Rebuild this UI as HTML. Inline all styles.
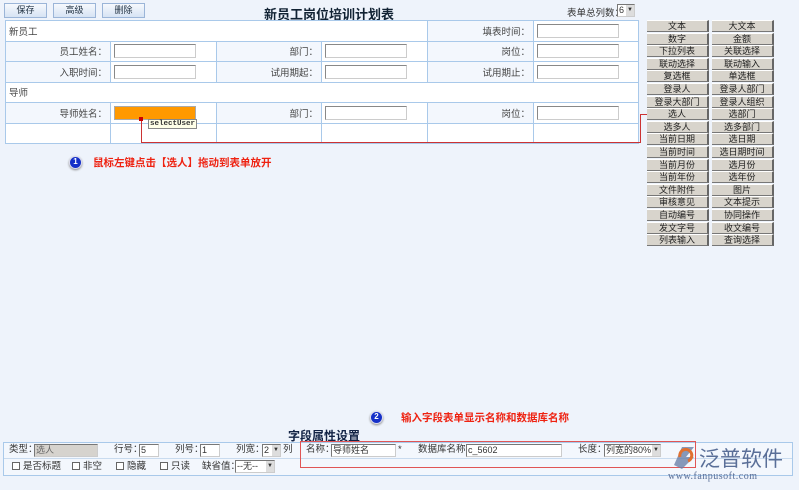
<!DOCTYPE html><html><head><meta charset="utf-8"><style>
*{box-sizing:border-box;margin:0;padding:0}
body{width:799px;height:490px;background:#eef3fb;position:relative;overflow:hidden;font-family:"Liberation Sans","Noto Sans CJK SC",sans-serif;font-size:10px;color:#333}
.a{position:absolute}
.btn{position:absolute;top:3px;height:15px;width:43px;border:1px solid #9bb5d8;background:linear-gradient(#f6f9fd,#d6e3f4);font-size:9px;text-align:center;line-height:13px;color:#234}
table{position:absolute;left:5px;top:20px;border-collapse:collapse;background:#fff}
td{border:1px solid #a9c9ea;height:20.5px;font-size:9.5px;padding:0 3px;color:#444}
td.l{text-align:right;background:#f3f7fd}
.in{display:inline-block;width:82px;height:14px;border:1px solid #888;border-right-color:#ccc;border-bottom-color:#ccc;background:#fff;vertical-align:middle}
.pb{position:absolute;width:62px;height:12px;background:#d8d4cc;border-right:2px solid #666;border-bottom:1px solid #777;border-top:1px solid #fff;font-size:9px;line-height:11px;text-align:center;color:#222}
.red{color:#e21;font-weight:bold;font-size:10.5px}
.num{position:absolute;width:13px;height:13px;border-radius:50%;background:#1530c8;border:1.5px solid #dde;color:#fff;font-size:8px;font-weight:bold;text-align:center;line-height:10px;box-shadow:0 1px 2px #888}
.sm{position:absolute;font-size:9.5px;color:#333;line-height:12px}
.box{position:absolute;height:12px;border:1px solid #777;border-right-color:#ccc;border-bottom-color:#ccc;background:#fff;font-size:9px;line-height:11px;padding-left:1px}
.cb{display:inline-block;width:8px;height:8px;border:1px solid #666;background:#fff;margin-right:3px;vertical-align:-1px}
</style></head><body>
<div class="btn" style="left:4px">保存</div>
<div class="btn" style="left:53px">高级</div>
<div class="btn" style="left:102px">删除</div>
<div class="a" style="left:264px;top:4px;font-size:13px;font-weight:bold;color:#123">新员工岗位培训计划表</div>
<div class="a" style="left:567px;top:5px;font-size:9.5px">表单总列数：</div>
<div class="box" style="left:617px;top:4px;width:18px;height:13px">6<span style="position:absolute;right:0;top:0;width:8px;height:11px;background:#ddd;font-size:6px;text-align:center">▼</span></div>
<table>
<tr><td colspan="4" style="width:422px">新员工</td><td class="l" style="width:106px">填表时间：</td><td style="width:105px"><span class="in"></span></td></tr>
<tr><td class="l" style="width:105px">员工姓名：</td><td style="width:106px"><span class="in"></span></td><td class="l" style="width:105px">部门：</td><td style="width:106px"><span class="in"></span></td><td class="l">岗位：</td><td><span class="in"></span></td></tr>
<tr><td class="l">入职时间：</td><td><span class="in"></span></td><td class="l">试用期起：</td><td><span class="in"></span></td><td class="l">试用期止：</td><td><span class="in"></span></td></tr>
<tr><td colspan="6">导师</td></tr>
<tr><td class="l">导师姓名：</td><td><span class="in" style="background:#f90;border-color:#aaa"></span></td><td class="l">部门：</td><td><span class="in"></span></td><td class="l">岗位：</td><td><span class="in"></span></td></tr>
<tr><td></td><td></td><td></td><td></td><td></td><td></td></tr>
</table>
<div class="a" style="left:148px;top:119px;border:1px solid #888;background:#ffffe8;font-family:'Liberation Mono',monospace;font-size:7.5px;padding:0 1px;font-weight:bold">selectUser</div>
<div class="a" style="left:141px;top:119px;width:100px;height:24px;border-left:1px solid #c33;border-bottom:1px solid #c33"></div>
<div class="a" style="left:241px;top:142px;width:399px;height:1px;background:#c33"></div>
<div class="a" style="left:640px;top:114px;width:1px;height:29px;background:#c33"></div>
<div class="a" style="left:640px;top:114px;width:8px;height:1px;background:#c33"></div>
<div class="a" style="left:139px;top:117px;width:4px;height:4px;background:#c00"></div>
<div class="num" style="left:69px;top:156px">1</div>
<div class="a red" style="left:93px;top:155px">鼠标左键点击【选人】拖动到表单放开</div>
<div id="pal"></div>
<script>
var L=["文本","数字","下拉列表","联动选择","复选框","登录人","登录大部门","选人","选多人","当前日期","当前时间","当前月份","当前年份","文件附件","审核意见","自动编号","发文字号","列表输入"];
var R=["大文本","金额","关联选择","联动输入","单选框","登录人部门","登录人组织","选部门","选多部门","选日期","选日期时间","选月份","选年份","图片","文本提示","协同操作","收文编号","查询选择"];
var h="";for(var i=0;i<18;i++){var t=20+i*12.6;h+='<div class="pb" style="left:647px;top:'+t+'px">'+L[i]+'</div><div class="pb" style="left:712px;top:'+t+'px">'+R[i]+'</div>';}
document.getElementById('pal').innerHTML=h;
</script>
<div class="num" style="left:370px;top:411px">2</div>
<div class="a red" style="left:401px;top:410px">输入字段表单显示名称和数据库名称</div>
<div class="a" style="left:288px;top:427px;font-size:12px;font-weight:bold;color:#124">字段属性设置</div>
<div class="a" style="left:3px;top:442px;width:790px;height:34px;border:1px solid #a9c9ea;background:#f3f7fd"></div>
<div class="a" style="left:4px;top:458px;width:788px;height:1px;background:#c9dbef"></div>
<div class="sm" style="left:9px;top:444px">类型：</div>
<div class="box" style="left:34px;top:444px;width:64px;height:13px;background:#d6d3ce;color:#666">选人</div>
<div class="sm" style="left:114px;top:444px">行号：</div><div class="box" style="left:139px;top:444px;width:20px;height:13px">5</div>
<div class="sm" style="left:175px;top:444px">列号：</div><div class="box" style="left:200px;top:444px;width:20px;height:13px">1</div>
<div class="sm" style="left:236px;top:444px">列宽：</div><div class="box" style="left:262px;top:444px;width:19px;height:13px">2<span style="position:absolute;right:0;top:0;width:8px;height:11px;background:#ddd;font-size:6px;text-align:center">▼</span></div><div class="sm" style="left:283px;top:444px">列</div>
<div class="sm" style="left:306px;top:444px">名称：</div><div class="box" style="left:331px;top:444px;width:65px;height:13px">导师姓名</div><div class="sm" style="left:398px;top:444px">*</div>
<div class="sm" style="left:418px;top:444px">数据库名称：</div><div class="box" style="left:466px;top:444px;width:96px;height:13px">c_5602</div>
<div class="sm" style="left:578px;top:444px">长度：</div><div class="box" style="left:604px;top:444px;width:57px;height:13px">列宽的80%<span style="position:absolute;right:0;top:0;width:8px;height:11px;background:#ddd;font-size:6px;text-align:center">▼</span></div>
<div class="a" style="left:300px;top:441px;width:396px;height:27px;border:1px solid #e05555"></div>
<div class="sm" style="left:12px;top:461px"><span class="cb"></span>是否标题</div>
<div class="sm" style="left:72px;top:461px"><span class="cb"></span>非空</div>
<div class="sm" style="left:116px;top:461px"><span class="cb"></span>隐藏</div>
<div class="sm" style="left:160px;top:461px"><span class="cb"></span>只读</div>
<div class="sm" style="left:202px;top:461px">缺省值：</div><div class="box" style="left:235px;top:460px;width:40px;height:13px">--无--<span style="position:absolute;right:0;top:0;width:8px;height:11px;background:#ddd;font-size:6px;text-align:center">▼</span></div>
<svg class="a" style="left:668px;top:443px" width="30" height="28"><path d="M6 22 L14 4 L26 4 L18 14 L26 14 L14 26 Z" fill="#6a7fa8" opacity=".8"/><path d="M12 14 A6 6 0 1 1 20 18" stroke="#e07030" stroke-width="3" fill="none"/></svg>
<div class="a" style="left:699px;top:443px;font-size:21px;color:#5a6f98">泛普软件</div>
<div class="a" style="left:668px;top:471px;font-size:10px;color:#5a6f98;font-family:'Liberation Serif',serif;letter-spacing:.5px">www.fanpusoft.com</div>
</body></html>
